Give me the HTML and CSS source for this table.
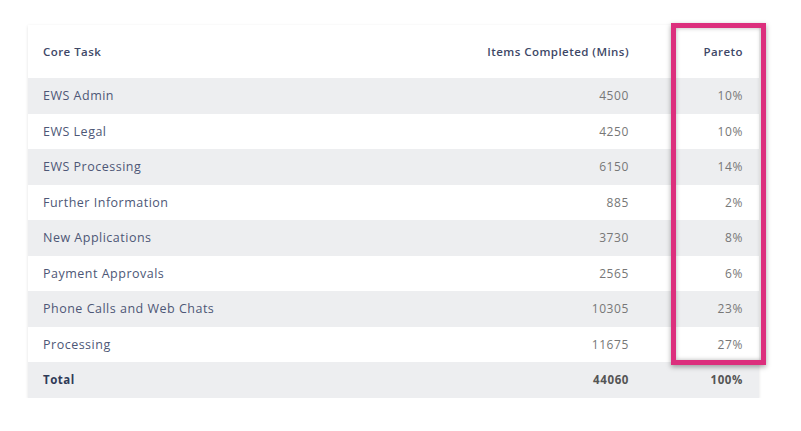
FILE: index.html
```html
<!DOCTYPE html>
<html lang="en">
<head>
<meta charset="utf-8">
<title>Pareto</title>
<link rel="stylesheet" href="styles.css">
</head>
<body>
<div class="card">
  <table class="grid">
    <thead>
      <tr><th class="name">Core Task</th><th class="num">Items Completed (Mins)</th><th class="pct">Pareto</th></tr>
    </thead>
    <tbody>
      <tr class="alt"><td class="name">EWS Admin</td><td class="num">4500</td><td class="pct">10%</td></tr>
      <tr><td class="name">EWS Legal</td><td class="num">4250</td><td class="pct">10%</td></tr>
      <tr class="alt"><td class="name">EWS Processing</td><td class="num">6150</td><td class="pct">14%</td></tr>
      <tr><td class="name">Further Information</td><td class="num">885</td><td class="pct">2%</td></tr>
      <tr class="alt"><td class="name">New Applications</td><td class="num">3730</td><td class="pct">8%</td></tr>
      <tr><td class="name">Payment Approvals</td><td class="num">2565</td><td class="pct">6%</td></tr>
      <tr class="alt"><td class="name">Phone Calls and Web Chats</td><td class="num">10305</td><td class="pct">23%</td></tr>
      <tr><td class="name">Processing</td><td class="num">11675</td><td class="pct">27%</td></tr>
    </tbody>
    <tfoot>
      <tr class="alt total"><td class="name">Total</td><td class="num">44060</td><td class="pct">100%</td></tr>
    </tfoot>
  </table>
  <div class="highlight"></div>
</div>
</body>
</html>
```
FILE: styles.css
```css
html, body {
  margin: 0;
  padding: 0;
  background: #ffffff;
}
body {
  padding: 25px 0 0 28px;
  font-family: "Open Sans", "Liberation Sans", sans-serif;
}
.card {
  position: relative;
  width: 731px;
  background: #fff;
  box-shadow: 0 1px 3px rgba(0, 0, 0, 0.12);
}
.grid {
  width: 100%;
  border-collapse: collapse;
  table-layout: fixed;
}
.grid th, .grid td {
  padding: 0 15px;
  white-space: nowrap;
}
.grid th {
  height: 53px;
  font-size: 11.5px;
  font-weight: 600;
  color: #3e4867;
  text-align: left;
  letter-spacing: 0.45px;
}
.grid td {
  height: 35.5px;
  font-size: 12.5px;
  color: #4d5776;
  letter-spacing: 0.5px;
}
.grid .num, .grid .pct {
  text-align: right;
}
.grid td.num, .grid td.pct {
  color: #777777;
  font-size: 12px;
  letter-spacing: 0.6px;
}
.grid .pct {
  width: 84px;
  padding-right: 16px;
}
.grid tr.alt td {
  background: #edeef0;
}
.grid tr.total td {
  font-weight: 700;
  color: #2f3a57;
  font-size: 11.5px;
}
.grid tr.total td.num, .grid tr.total td.pct {
  color: #555555;
}
.highlight {
  position: absolute;
  left: 643px;
  top: -2px;
  width: 85px;
  height: 332px;
  border: 5px solid #dc2f7d;
  box-shadow: 0 2px 5px rgba(0, 0, 0, 0.35), inset 0 0 4px rgba(0, 0, 0, 0.3);
  pointer-events: none;
}
```
